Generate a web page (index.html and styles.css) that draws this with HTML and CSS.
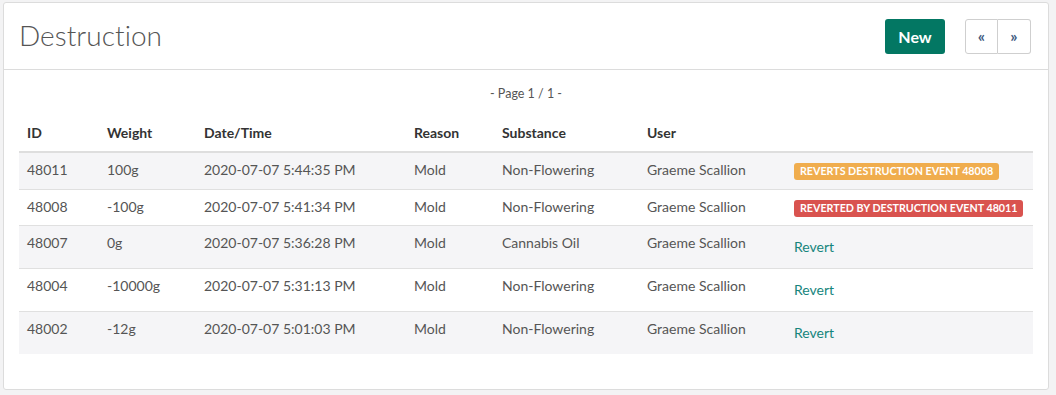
FILE: index.html
```html
<!DOCTYPE html>
<html lang="en">
<head>
<meta charset="utf-8">
<title>Destruction</title>
<link rel="stylesheet" href="styles.css">
</head>
<body>
<div class="panel">
  <div class="panel-heading">
    <h1 class="title">Destruction</h1>
    <div class="actions">
      <button class="btn-new" type="button">New</button>
      <div class="pager">
        <a class="pager-btn" href="#">&laquo;</a>
        <a class="pager-btn" href="#">&raquo;</a>
      </div>
    </div>
  </div>
  <div class="panel-body">
    <div class="page-info">- Page 1 / 1 -</div>
    <table class="grid">
      <colgroup>
        <col class="c-id"><col class="c-weight"><col class="c-date"><col class="c-reason"><col class="c-substance"><col class="c-user"><col class="c-action">
      </colgroup>
      <thead>
        <tr><th>ID</th><th>Weight</th><th>Date/Time</th><th>Reason</th><th>Substance</th><th>User</th><th></th></tr>
      </thead>
      <tbody>
        <tr><td>48011</td><td>100g</td><td>2020-07-07 5:44:35 PM</td><td>Mold</td><td>Non-Flowering</td><td>Graeme Scallion</td><td><span class="label label-warning">Reverts destruction event 48008</span></td></tr>
        <tr><td>48008</td><td>-100g</td><td>2020-07-07 5:41:34 PM</td><td>Mold</td><td>Non-Flowering</td><td>Graeme Scallion</td><td><span class="label label-danger">Reverted by destruction event 48011</span></td></tr>
        <tr><td>48007</td><td>0g</td><td>2020-07-07 5:36:28 PM</td><td>Mold</td><td>Cannabis Oil</td><td>Graeme Scallion</td><td><a class="revert" href="#">Revert</a></td></tr>
        <tr><td>48004</td><td>-10000g</td><td>2020-07-07 5:31:13 PM</td><td>Mold</td><td>Non-Flowering</td><td>Graeme Scallion</td><td><a class="revert" href="#">Revert</a></td></tr>
        <tr><td>48002</td><td>-12g</td><td>2020-07-07 5:01:03 PM</td><td>Mold</td><td>Non-Flowering</td><td>Graeme Scallion</td><td><a class="revert" href="#">Revert</a></td></tr>
      </tbody>
    </table>
  </div>
</div>
</body>
</html>
```
FILE: styles.css
```css
html, body {
  margin: 0;
  padding: 0;
}
body {
  background: #f3f3f4;
  font-family: Lato, "Open Sans", "Liberation Sans", sans-serif;
  font-size: 14px;
  line-height: 20px;
  color: #555;
  padding: 2px 7px 0 3px;
}
.panel {
  background: #fff;
  border: 1px solid #dcdcdc;
  border-radius: 3px;
  height: 388px;
  box-sizing: border-box;
}
.panel-heading {
  display: flex;
  align-items: center;
  justify-content: space-between;
  height: 66px;
  padding: 0 17px 0 15px;
  border-bottom: 1px solid #dcdcdc;
}
.title {
  margin: 0 0 3px;
  font-weight: 300;
  font-size: 28px;
  line-height: 34px;
  color: #555;
  letter-spacing: 0.05px;
}
.actions {
  display: flex;
  align-items: center;
  gap: 20px;
  margin-top: 1px;
}
.btn-new {
  height: 35px;
  width: 60px;
  border: none;
  border-radius: 3px;
  background: #037763;
  color: #fff;
  font-family: Lato, "Open Sans", "Liberation Sans", sans-serif;
  font-weight: 700;
  font-size: 16px;
  padding: 0;
}
.pager {
  display: flex;
}
.pager-btn {
  display: flex;
  align-items: center;
  justify-content: center;
  width: 33px;
  height: 35px;
  box-sizing: border-box;
  border: 1px solid #cfcfcf;
  color: #3d5a80;
  text-decoration: none;
  font-size: 16px;
  font-weight: 700;
  background: #fff;
  padding-bottom: 2px;
}
.pager-btn:first-child {
  border-radius: 3px 0 0 3px;
}
.pager-btn + .pager-btn {
  border-left: none;
  border-radius: 0 3px 3px 0;
}
.panel-body {
  padding: 15px 15px 0 15px;
}
.page-info {
  text-align: center;
  font-size: 12.5px;
  line-height: 17px;
  color: #555;
  margin-bottom: 14px;
}
.grid {
  width: 100%;
  border-collapse: separate;
  border-spacing: 0;
  table-layout: fixed;
}
.c-id { width: 80px; }
.c-weight { width: 97px; }
.c-date { width: 210px; }
.c-reason { width: 88px; }
.c-substance { width: 145px; }
.c-user { width: 147px; }
.grid th {
  text-align: left;
  font-weight: 700;
  color: #333;
  padding: 7px 8px 8px;
  border-bottom: 2px solid #dedede;
}
.grid td {
  padding: 7px 8px 8px;
  border-top: 1px solid #e0e0e0;
  vertical-align: top;
  white-space: nowrap;
  color: #555;
}
.grid tbody tr:first-child td {
  border-top: none;
  padding-bottom: 9px;
}
.grid tbody tr:nth-child(odd) td {
  background: #f5f5f7;
}
.label {
  display: inline-block;
  font-size: 10.7px;
  font-weight: 700;
  line-height: 1;
  color: #fff;
  text-transform: uppercase;
  padding: 3px 6px 3px;
  border-radius: 3px;
  vertical-align: 0;
}
.label-warning {
  background: #f0ad4e;
}
.label-danger {
  background: #d9534f;
}
.revert {
  display: inline-block;
  color: #16857c;
  text-decoration: none;
  padding: 4px 0 3px;
}
```
